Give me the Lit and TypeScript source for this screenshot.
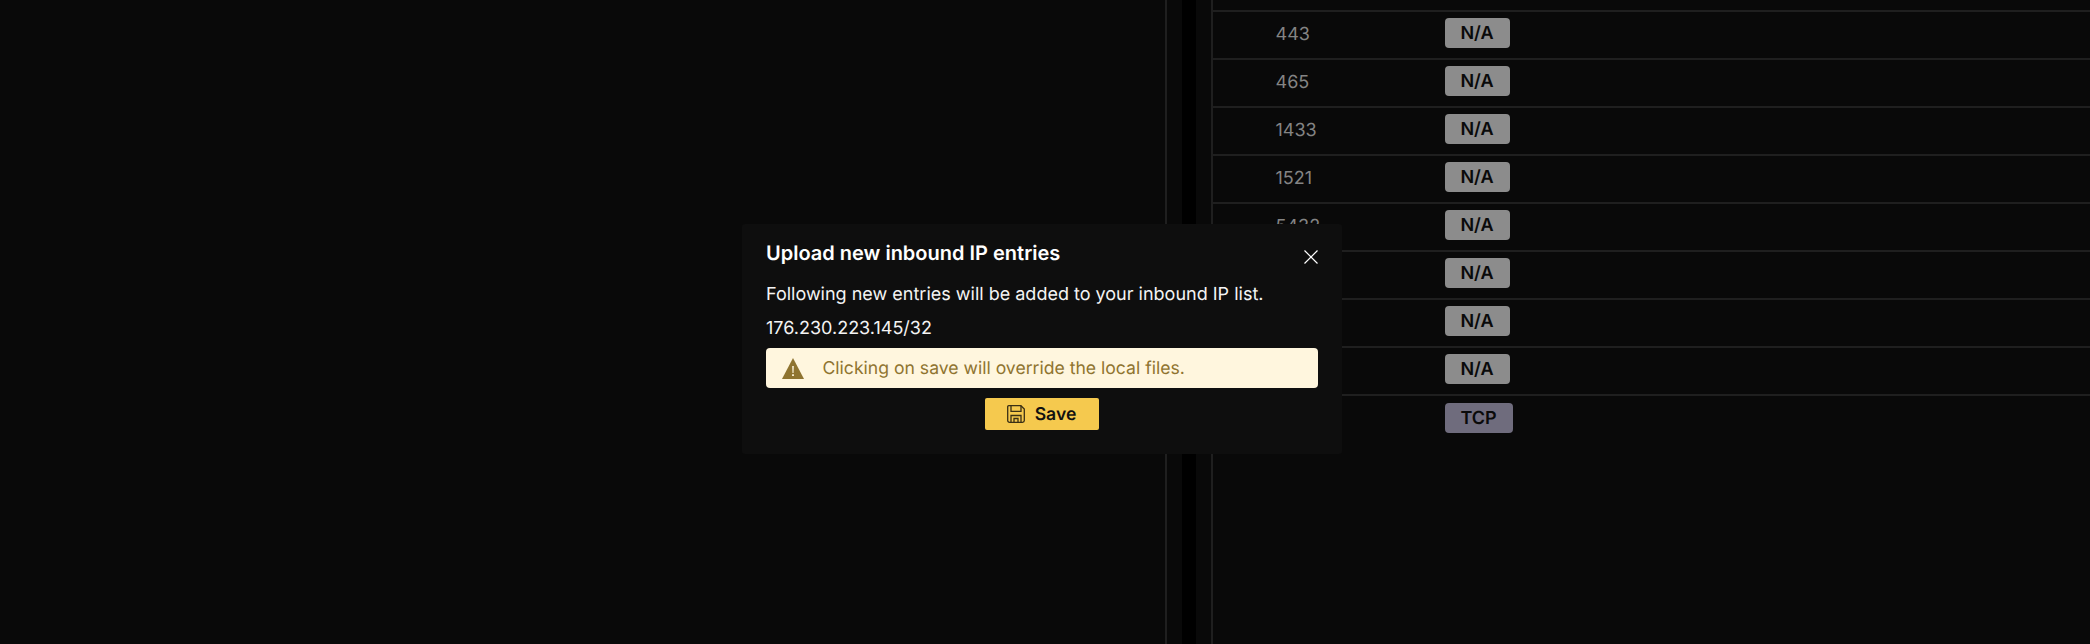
import { LitElement, html, css, svg } from "lit";
import { customElement } from "lit/decorators.js";

const rows: [string, string][] = [
  ["443", "N/A"], ["465", "N/A"], ["1433", "N/A"], ["1521", "N/A"], ["5432", "N/A"],
  ["3306", "N/A"], ["6379", "N/A"], ["27017", "N/A"], ["8443", "TCP"],
];

@customElement("app-root")
export class AppRoot extends LitElement {
  static styles = css`
    :host { display: block; position: relative; width: 2090px; height: 644px; overflow: hidden; background: #090909; font-family: Inter, "Liberation Sans", sans-serif; text-rendering: geometricPrecision; }
    .page { display: flex; height: 644px; }
    .left { width: 1165px; flex: none; border-right: 2px solid #1f1f1f; }
    .gutter { width: 14.5px; flex: none; background: #090909; }
    .black { width: 14.5px; flex: none; background: #000; }
    .gutter2 { width: 15px; flex: none; background: #090909; }
    .table { flex: 1; border-left: 2px solid #1f1f1f; display: flex; flex-direction: column; }
    .stub { height: 10px; border-bottom: 2px solid #1f1f1f; }
    .row { box-sizing: border-box; height: 48px; padding-bottom: 4px; display: flex; align-items: center; border-bottom: 2px solid #1f1f1f; }
    .row:last-child { border-bottom: none; }
    .port { width: 169px; margin-left: 62.5px; margin-top: 2px; font-size: 18px; color: #848484; }
    .badge { height: 30px; border-radius: 4px; background: #8c8c8c; color: #0a0a0a; font-size: 18px; font-weight: 600; display: flex; align-items: center; justify-content: center; width: 65px; }
    .badge.tcp { background: #6f6c7d; width: 68px; }
    .modal { position: absolute; left: 742px; top: 224px; width: 600px; height: 230px; box-sizing: border-box; padding: 15px 24px 24px; background: #0e0e0e; border-radius: 3px; box-shadow: 0 0 40px rgba(255,255,255,.008); color: #fff; display: flex; flex-direction: column; }
    .head { display: flex; justify-content: space-between; align-items: flex-start; height: 28px; margin-bottom: 16px; }
    .title { font-size: 20px; line-height: 28px; font-weight: 600; color: #fff; }
    .close { width: 14px; height: 14px; margin-top: 11px; display: block; }
    .line { font-size: 18px; line-height: 24px; color: #f4f4f4; margin-bottom: 10px; }
    .line.ip { margin-bottom: 7px; }
    .alert { height: 40px; border-radius: 4px; background: #fff6de; display: flex; align-items: center; padding-left: 16px; color: #8f7430; font-size: 17.6px; }
    .alert svg { width: 22px; height: 21px; margin-right: 18.5px; flex: none; }
    .actions { display: flex; justify-content: center; margin-top: 10px; padding-right: 1px; }
    .save { width: 114px; height: 32px; border: none; border-radius: 2px; background: #f5c94e; color: #111; font: 600 17.6px Inter, "Liberation Sans", sans-serif; text-rendering: geometricPrecision; display: flex; align-items: center; justify-content: center; gap: 10px; padding: 0; }
    .save svg { width: 18px; height: 18px; flex: none; }
  `;

  render() {
    return html`
      <div class="page">
        <div class="left"></div>
        <div class="gutter"></div>
        <div class="black"></div>
        <div class="gutter2"></div>
        <div class="table">
          <div class="stub"></div>
          ${rows.map(([p, b]) => html`
            <div class="row">
              <span class="port">${p}</span>
              <span class="badge ${b === "TCP" ? "tcp" : ""}">${b}</span>
            </div>`)}
        </div>
      </div>
      <div class="modal">
        <div class="head">
          <span class="title">Upload new inbound IP entries</span>
          <svg class="close" viewBox="0 0 14 14" fill="none" stroke="#fff" stroke-width="1.2"><path d="M.5.5l13 13M13.5.5l-13 13"/></svg>
        </div>
        <div class="line">Following new entries will be added to your inbound IP list.</div>
        <div class="line ip">176.230.223.145/32</div>
        <div class="alert">
          <svg viewBox="0 0 22 21">
            <path fill="#8f7430" d="M11 0 L22 21 H0 Z"/>
            <path fill="#fff6de" d="M10.2 8h1.6l-.3 7h-1zM10.1 16.3h1.8v1.8h-1.8z"/>
          </svg>
          <span>Clicking on save will override the local files.</span>
        </div>
        <div class="actions">
          <button class="save">
            <svg viewBox="0 0 18 18" fill="none" stroke="#3a3015" stroke-width="1.3">
              ${svg`<path d="M1.7.7h12.2l3.4 3.4v11.4a1.8 1.8 0 0 1-1.8 1.8H2.5a1.8 1.8 0 0 1-1.8-1.8V1.7a1 1 0 0 1 1-1z"/><path d="M4 .7v5.6h10V.7"/><path d="M4 17.3v-6.8h10v6.8"/><path d="M7 17.3v-3.8h4v3.8"/>`}
            </svg>
            Save
          </button>
        </div>
      </div>
    `;
  }
}
